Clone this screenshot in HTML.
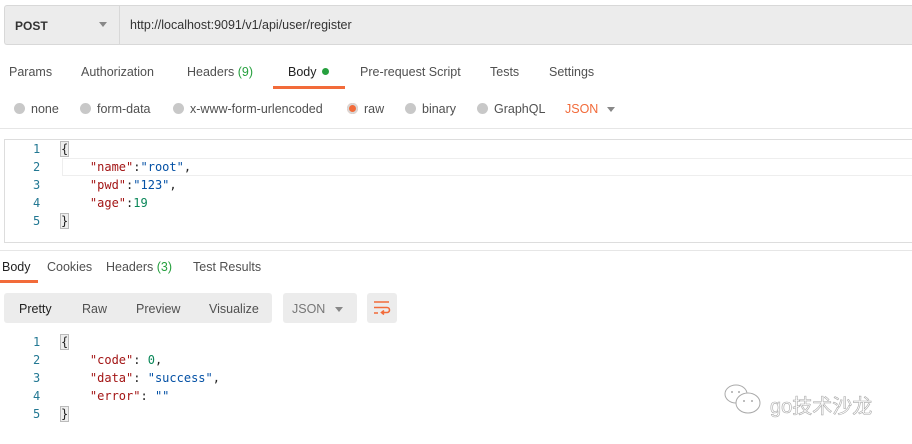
<!DOCTYPE html>
<html><head><meta charset="utf-8"><style>
body{margin:0;width:912px;height:444px;background:#fff;font-family:"Liberation Sans","DejaVu Sans",sans-serif;color:#505050;position:relative;overflow:hidden;font-size:12.5px}
.a{position:absolute;white-space:nowrap}
.mono{font-family:"DejaVu Sans Mono","Liberation Mono",monospace;font-size:12px}
.k{color:#a31515}.s{color:#0451a5}.n{color:#098658}.ln{color:#237893}
.rd{display:inline-block;width:11px;height:11px;border-radius:50%;background:#c8c8c8;vertical-align:-1px;margin-right:6px}
.g{color:#26a03e}
</style></head><body>
<div class="a" style="left:4px;top:5px;width:908px;height:38px;background:#ececec;border:1px solid #d8d8d8;border-right:none;border-radius:3px 0 0 3px"></div>
<div class="a" style="left:119px;top:5px;width:1px;height:40px;background:#d8d8d8"></div>
<div class="a" style="left:15px;top:19px;font-weight:bold;color:#333;font-size:12px">POST</div>
<div class="a" style="left:99px;top:22px;border-left:4px solid transparent;border-right:4px solid transparent;border-top:5px solid #888"></div>
<div class="a" style="left:130px;top:18px;color:#333;font-size:12.5px">http://localhost:9091/v1/api/user/register</div>

<div class="a" style="left:9px;top:65px">Params</div>
<div class="a" style="left:81px;top:65px">Authorization</div>
<div class="a" style="left:187px;top:65px">Headers <span class="g">(9)</span></div>
<div class="a" style="left:288px;top:65px;color:#222">Body <span style="display:inline-block;width:7px;height:7px;border-radius:50%;background:#26a03e;vertical-align:1px;margin-left:2px"></span></div>
<div class="a" style="left:273px;top:86px;width:72px;height:3px;background:#f26b3a"></div>
<div class="a" style="left:360px;top:65px">Pre-request Script</div>
<div class="a" style="left:490px;top:65px">Tests</div>
<div class="a" style="left:549px;top:65px">Settings</div>

<div class="a" style="left:14px;top:102px"><span class="rd"></span>none</div>
<div class="a" style="left:80px;top:102px"><span class="rd"></span>form-data</div>
<div class="a" style="left:173px;top:102px"><span class="rd"></span>x-www-form-urlencoded</div>
<div class="a" style="left:347px;top:102px"><span class="rd" style="background:#f26b3a;box-shadow:inset 0 0 0 2px #d8d8d8"></span>raw</div>
<div class="a" style="left:405px;top:102px"><span class="rd"></span>binary</div>
<div class="a" style="left:477px;top:102px"><span class="rd"></span>GraphQL</div>
<div class="a" style="left:565px;top:102px;color:#f26b3a">JSON</div>
<div class="a" style="left:607px;top:107px;border-left:4px solid transparent;border-right:4px solid transparent;border-top:5px solid #888"></div>
<div class="a" style="left:0;top:128px;width:912px;height:1px;background:#e6e6e6"></div>

<div class="a" style="left:4px;top:139px;width:908px;height:102px;border:1px solid #ddd;border-right:none"></div>
<div class="a" style="left:62px;top:158px;width:850px;height:16px;border:1px solid #eee"></div>
<div class="a mono ln" style="left:33px;top:140px;line-height:18px;text-align:right">1<br>2<br>3<br>4<br>5</div>
<div class="a mono" style="left:61px;top:140px;line-height:18px;color:#222"><span style="background:#eee;outline:1px solid #bbb">{</span><br>&nbsp;&nbsp;&nbsp;&nbsp;<span class="k">"name"</span>:<span class="s">"root"</span>,<br>&nbsp;&nbsp;&nbsp;&nbsp;<span class="k">"pwd"</span>:<span class="s">"123"</span>,<br>&nbsp;&nbsp;&nbsp;&nbsp;<span class="k">"age"</span>:<span class="n">19</span><br><span style="background:#eee;outline:1px solid #bbb">}</span></div>
<div class="a" style="left:0;top:250px;width:912px;height:1px;background:#e6e6e6"></div>

<div class="a" style="left:2px;top:260px;color:#222">Body</div>
<div class="a" style="left:0;top:280px;width:38px;height:3px;background:#f26b3a"></div>
<div class="a" style="left:47px;top:260px">Cookies</div>
<div class="a" style="left:106px;top:260px">Headers <span class="g">(3)</span></div>
<div class="a" style="left:193px;top:260px">Test Results</div>

<div class="a" style="left:4px;top:293px;width:268px;height:30px;background:#ececec;border-radius:3px"></div>
<div class="a" style="left:19px;top:302px;color:#222">Pretty</div>
<div class="a" style="left:82px;top:302px">Raw</div>
<div class="a" style="left:136px;top:302px">Preview</div>
<div class="a" style="left:209px;top:302px">Visualize</div>
<div class="a" style="left:283px;top:293px;width:74px;height:30px;background:#ececec;border-radius:3px"></div>
<div class="a" style="left:292px;top:302px;color:#777">JSON</div>
<div class="a" style="left:335px;top:307px;border-left:4px solid transparent;border-right:4px solid transparent;border-top:5px solid #888"></div>
<div class="a" style="left:367px;top:293px;width:30px;height:30px;background:#ececec;border-radius:3px"></div>
<svg class="a" style="left:373px;top:300px" width="18" height="16" viewBox="0 0 18 16"><path d="M1 2H16M1 7.5H14a2.5 2.5 0 0 1 0 5H9M1 13H5M11 10.5L8.5 12.5 11 14.5" stroke="#f26b3a" stroke-width="1.6" fill="none"/></svg>

<div class="a mono ln" style="left:33px;top:333px;line-height:18px">1<br>2<br>3<br>4<br>5</div>
<div class="a mono" style="left:61px;top:333px;line-height:18px;color:#222"><span style="background:#eee;outline:1px solid #bbb">{</span><br>&nbsp;&nbsp;&nbsp;&nbsp;<span class="k">"code"</span>: <span class="n">0</span>,<br>&nbsp;&nbsp;&nbsp;&nbsp;<span class="k">"data"</span>: <span class="s">"success"</span>,<br>&nbsp;&nbsp;&nbsp;&nbsp;<span class="k">"error"</span>: <span class="s">""</span><br><span style="background:#eee;outline:1px solid #bbb">}</span></div>

<svg class="a" style="left:724px;top:383px" width="40" height="34" viewBox="0 0 40 34"><ellipse cx="12" cy="11" rx="11" ry="9" fill="#fff" stroke="#aaa"/><ellipse cx="24" cy="20" rx="12" ry="10" fill="#fff" stroke="#aaa"/><circle cx="8" cy="9" r="1" fill="#aaa"/><circle cx="15" cy="9" r="1" fill="#aaa"/><circle cx="20" cy="18" r="1" fill="#aaa"/><circle cx="28" cy="18" r="1" fill="#aaa"/></svg>
<div class="a" style="left:770px;top:390px;font-size:20px;color:#fff;-webkit-text-stroke:0.6px #aaa;font-family:'Liberation Sans','Noto Sans CJK SC',sans-serif">go技术沙龙</div>
</body></html>
